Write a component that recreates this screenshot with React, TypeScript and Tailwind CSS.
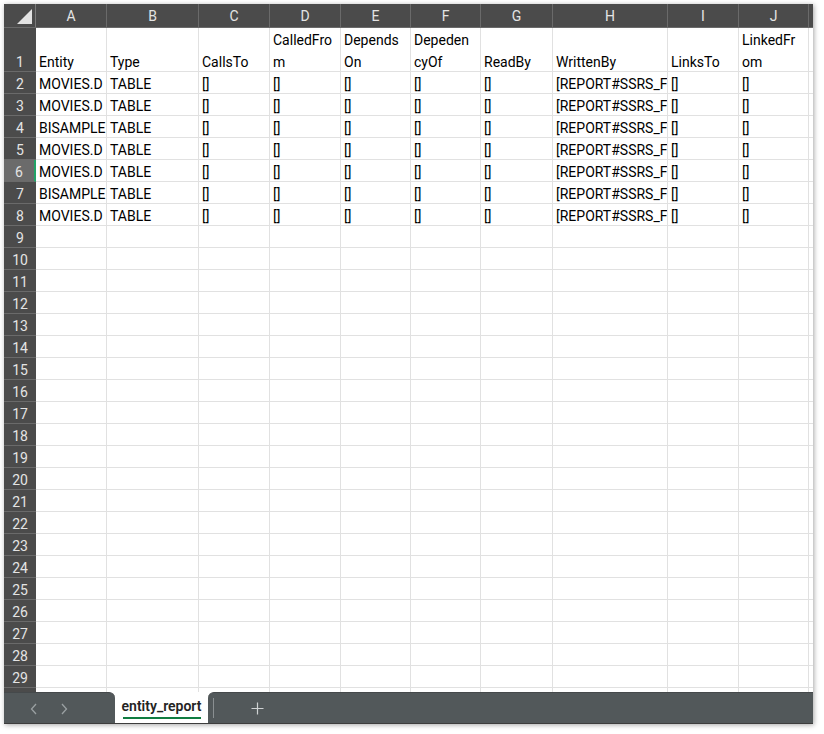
import React from "react";

const cols = ["A", "B", "C", "D", "E", "F", "G", "H", "I", "J"];
const gridCols =
  "grid grid-cols-[32px_71px_92px_71px_71px_70px_70px_72px_115px_71px_70px_1fr]";

// header row split into the two visual lines Excel wraps them into
const headers: [string, string][] = [
  ["", "Entity"],
  ["", "Type"],
  ["", "CallsTo"],
  ["CalledFro", "m"],
  ["Depends", "On"],
  ["Depeden", "cyOf"],
  ["", "ReadBy"],
  ["", "WrittenBy"],
  ["", "LinksTo"],
  ["LinkedFr", "om"],
];

// what is visible of each value once the column clips it
const entities = ["MOVIES.D", "MOVIES.D", "BISAMPLE", "MOVIES.D", "MOVIES.D", "BISAMPLE", "MOVIES.D"];

function dataRow(entity: string): string[] {
  return [entity, "TABLE", "[]", "[]", "[]", "[]", "[]", "[REPORT#SSRS_F", "[]", "[]"];
}

function RowHeader({ n, active }: { n?: number; active?: boolean }) {
  return (
    <div
      className={`flex h-[22px] items-center justify-center border-b border-[#6a6a6a] pt-[3px] text-[14px] leading-[18px] text-[#e4e4e4] ${
        active ? "bg-[#6b6b6b] border-r-2 border-r-[#21a366]" : "bg-[#4b4b4b]"
      }`}
    >
      {n}
    </div>
  );
}

function Cell({ children }: { children?: React.ReactNode }) {
  return (
    <div className="flex h-[22px] items-center overflow-hidden whitespace-nowrap border-b border-r border-[#e1e1e1] pl-[3px] pt-[3px] text-[14px] leading-[18px] text-black">
      {children}
    </div>
  );
}

export default function App() {
  // rows 9..29 are empty; one more row peeks in under the tab bar
  const emptyRows = Array.from({ length: 22 }, (_, i) => i + 9);

  return (
    <div className="min-h-screen w-full bg-white p-[4px]" style={{ fontFamily: "Roboto, 'Liberation Sans', sans-serif" }}>
      <div className="flex h-[720px] w-[809px] flex-col overflow-hidden bg-white shadow-[1px_1px_5px_rgba(0,0,0,0.35)]">
        {/* column letters */}
        <div className={`${gridCols} h-[24px] shrink-0 bg-[#4b4b4b] border-b border-[#6a6a6a]`}>
          <div className="relative border-r border-[#7a7a7a]">
            <svg className="absolute bottom-[3px] right-[3px]" width="15" height="15" viewBox="0 0 15 15">
              <polygon points="15,0 15,15 0,15" fill="#e2e2e2" />
            </svg>
          </div>
          {cols.map((c) => (
            <div key={c} className="flex items-center justify-center border-r border-[#6a6a6a] pt-[1px] text-[14px] text-[#e4e4e4]">
              {c}
            </div>
          ))}
          <div />
        </div>

        {/* sheet body */}
        <div className="h-[664px] shrink-0 overflow-hidden">
          <div className={gridCols}>
            <div className="flex h-[44px] flex-col items-center overflow-hidden border-b border-[#6a6a6a] bg-[#4b4b4b] pt-[23px] text-[14px] leading-[22px] text-[#e4e4e4]">
              1
            </div>
            {headers.map(([a, b], i) => (
              <div key={i} className="flex h-[44px] flex-col overflow-hidden whitespace-nowrap border-b border-r border-[#e1e1e1] pl-[3px] pt-[1px] text-[14px] leading-[22px] text-black">
                <span>{a || "\u00a0"}</span>
                <span>{b}</span>
              </div>
            ))}
            <div className="h-[44px] border-b border-[#e1e1e1]" />

            {entities.map((e, r) => (
              <React.Fragment key={r}>
                <RowHeader n={r + 2} active={r + 2 === 6} />
                {dataRow(e).map((v, i) => (
                  <Cell key={i}>{v}</Cell>
                ))}
                <div className="h-[22px] border-b border-[#e1e1e1]" />
              </React.Fragment>
            ))}

            {emptyRows.map((n) => (
              <React.Fragment key={n}>
                <RowHeader n={n < 30 ? n : undefined} />
                {cols.map((c) => (
                  <Cell key={c} />
                ))}
                <div className="h-[22px] border-b border-[#e1e1e1]" />
              </React.Fragment>
            ))}
          </div>
        </div>

        {/* sheet tabs */}
        <div className="flex h-[32px] shrink-0 border-b border-[#3d3d3d] bg-white">
          <div className="flex w-[111px] items-center gap-[22px] rounded-tr-[6px] border-t border-[#45494b] bg-[#52585a] pl-[26px] pt-[1px] text-[#9aa0a2]">
            <svg width="8" height="12" viewBox="0 0 8 12" fill="none" stroke="currentColor" strokeWidth="1.3">
              <path d="M6 1 L1.5 6 L6 11" />
            </svg>
            <svg width="8" height="12" viewBox="0 0 8 12" fill="none" stroke="currentColor" strokeWidth="1.3">
              <path d="M2 1 L6.5 6 L2 11" />
            </svg>
          </div>
          <div className="mb-[3px] flex w-[93px] flex-col items-center rounded-b-[5px] bg-white pt-[5px]">
            <span className="text-[14px] font-semibold leading-[18px] text-[#242424]">entity_report</span>
            <div className="mt-[2px] h-[2px] w-[78px] bg-[#107c41]" />
          </div>
          <div className="flex flex-1 items-center rounded-tl-[6px] border-t border-[#45494b] bg-[#52585a]">
            <div className="ml-[5px] h-[20px] w-px bg-[#8a8f91]" />
            <svg className="ml-[37px]" width="13" height="13" viewBox="0 0 13 13" stroke="#cfd2d3" strokeWidth="1.2">
              <path d="M6.5 0.5 V12.5 M0.5 6.5 H12.5" />
            </svg>
          </div>
        </div>
      </div>
    </div>
  );
}
